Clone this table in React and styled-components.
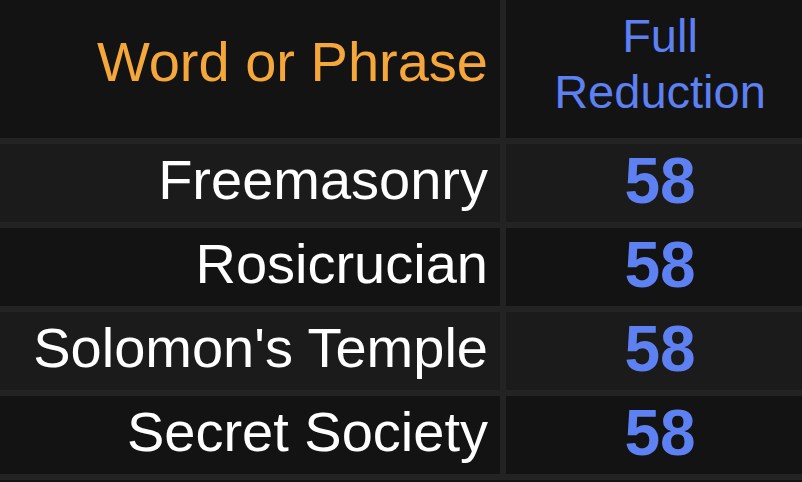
import React from "react";
import styled, { createGlobalStyle } from "styled-components";

const rows = [
  { phrase: "Freemasonry", value: 58 },
  { phrase: "Rosicrucian", value: 58 },
  { phrase: "Solomon's Temple", value: 58 },
  { phrase: "Secret Society", value: 58 },
];

const GlobalStyle = createGlobalStyle`
  html, body {
    margin: 0;
    padding: 0;
    background: #131313;
    overflow: hidden;
  }
  body {
    font-family: "Liberation Sans", Arial, Helvetica, sans-serif;
  }
`;

const Table = styled.div`
  display: grid;
  grid-template-columns: 500px 308px;
  grid-auto-rows: 78px;
  grid-template-rows: 138px;
  gap: 6px;
  width: 814px;
  background: #232323;
  padding-bottom: 6px;
`;

const Cell = styled.div`
  display: flex;
  align-items: center;
  justify-content: ${(p) => (p.$center ? "center" : "flex-end")};
  padding: 0 ${(p) => (p.$center ? "0" : "12px")} ${(p) => p.$lift || 0}px 0;
  background: ${(p) => (p.$dark ? "#131313" : "#1b1b1b")};
  overflow: hidden;
  white-space: nowrap;
`;

const PhraseHead = styled.span`
  color: #f5a73b;
  font-size: 56px;
  line-height: 1;
`;

const ValueHead = styled.span`
  color: #5d80f2;
  font-size: 47px;
  line-height: 56px;
  text-align: center;
`;

const Phrase = styled.span`
  color: #ffffff;
  font-size: 56px;
  line-height: 1;
`;

const Value = styled.span`
  color: #5d80f2;
  font-size: 64px;
  font-weight: 700;
  line-height: 1;
`;

export default function App() {
  return (
    <>
      <GlobalStyle />
      <Table>
        <Cell $dark $lift={14}>
          <PhraseHead>Word or Phrase</PhraseHead>
        </Cell>
        <Cell $dark $center $lift={11}>
          <ValueHead>
            Full
            <br />
            Reduction
          </ValueHead>
        </Cell>
        {rows.map((row, i) => (
          <React.Fragment key={row.phrase}>
            <Cell $dark={i % 2 === 1} $lift={6}>
              <Phrase>{row.phrase}</Phrase>
            </Cell>
            <Cell $dark={i % 2 === 1} $center $lift={5}>
              <Value>{row.value}</Value>
            </Cell>
          </React.Fragment>
        ))}
      </Table>
    </>
  );
}
